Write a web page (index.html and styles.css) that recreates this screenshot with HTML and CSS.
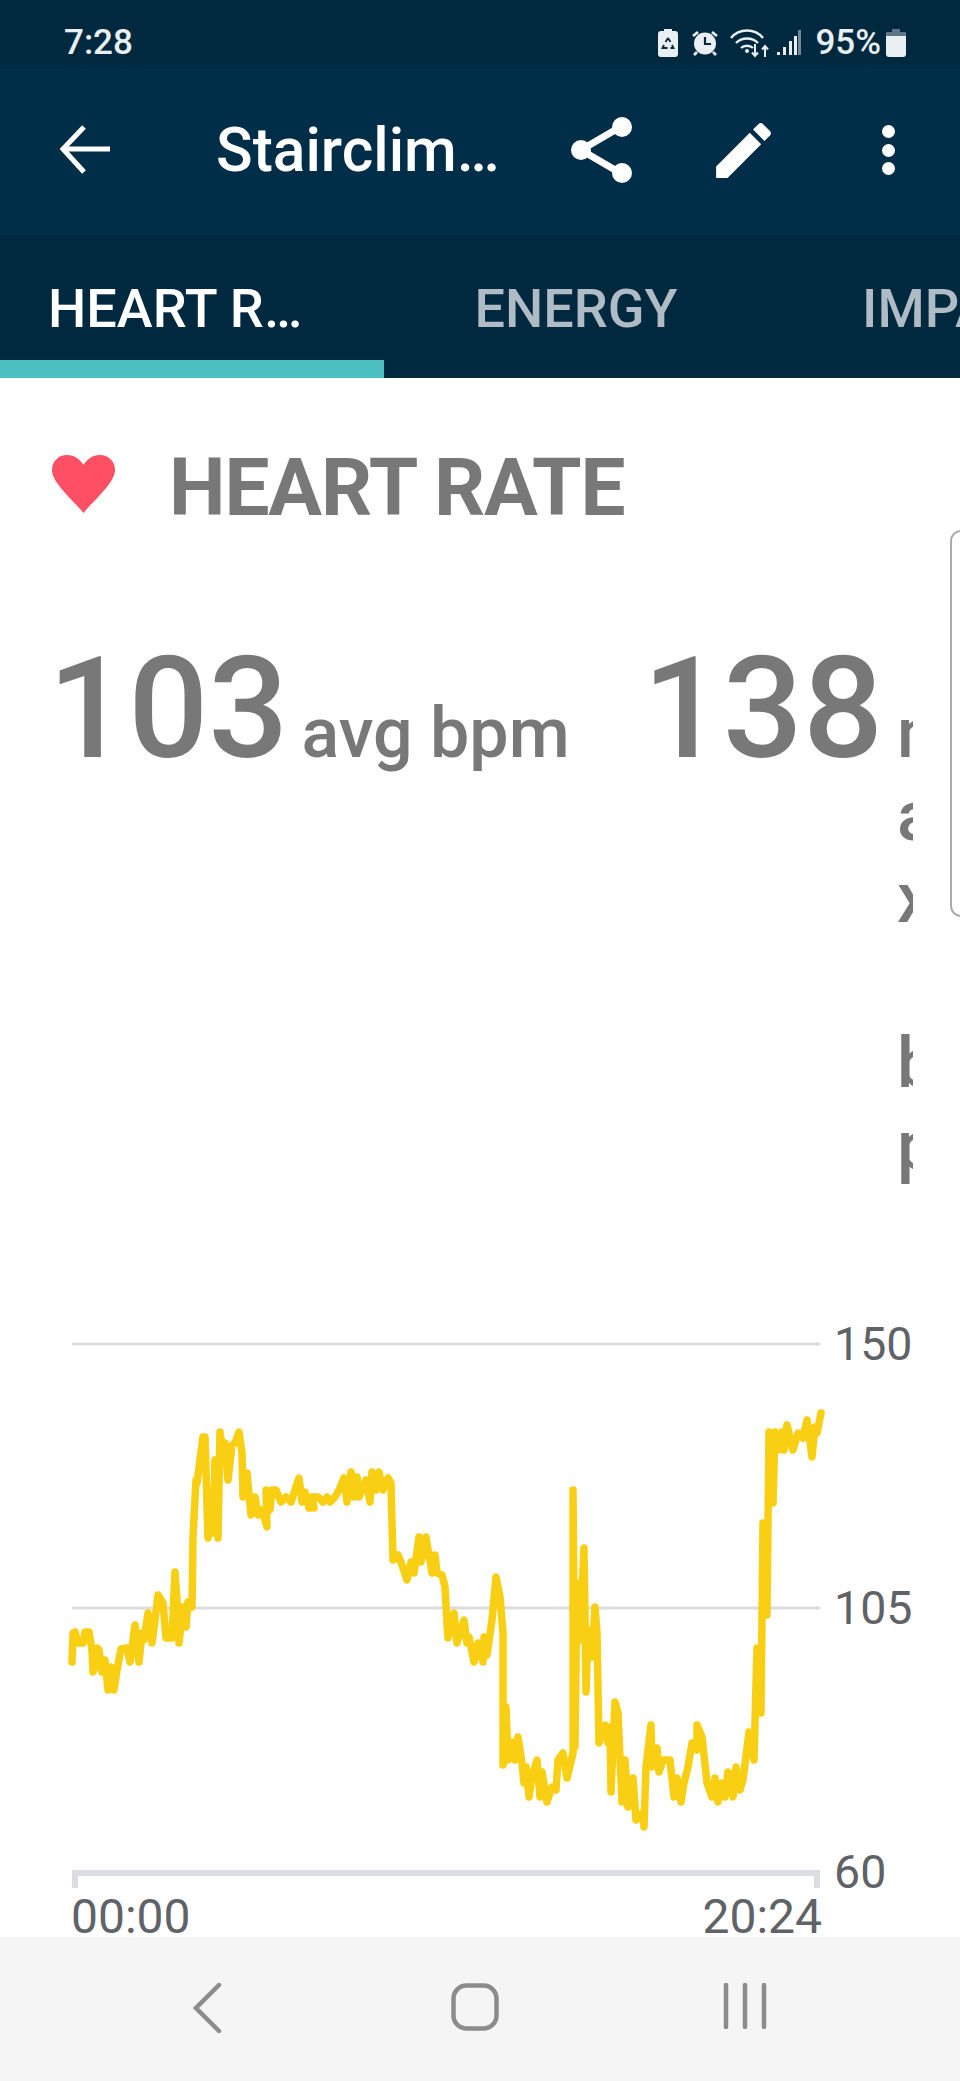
FILE: index.html
```html
<!DOCTYPE html>
<html lang="en">
<head>
<meta charset="utf-8">
<title>Stairclimber</title>
<link rel="stylesheet" href="styles.css">
</head>
<body>
<div class="screen">
  <header class="appbar">
    <div class="status">
      <span class="clock">7:28</span>
      <div class="status-icons">
        <svg class="ic-saver" width="20" height="28" viewBox="0 0 20 28"><path d="M6 0h8v2h3a3 3 0 0 1 3 3v20a3 3 0 0 1-3 3H3a3 3 0 0 1-3-3V5a3 3 0 0 1 3-3h3z" fill="#e9eff3"/><path d="M10 9l-2.500 4M10 9l2.500 4M6 16l-1.500 3h5M14 16l1.500 3h-3" fill="none" stroke="#06283d" stroke-width="1.800"/></svg>
        <svg class="ic-alarm" width="28" height="26" viewBox="0 0 28 26"><circle cx="14" cy="13.500" r="11" fill="#e9eff3"/><path d="M14 7v7h6" fill="none" stroke="#06283d" stroke-width="2.200"/><path d="M2 6l5-4M26 6l-5-4M6 22l-3 3M22 22l3 3" stroke="#e9eff3" stroke-width="2.800" fill="none"/></svg>
        <svg class="ic-wifi" width="40" height="30" viewBox="0 0 40 30"><path d="M1 10C9 0 25 0 33 10M6 15c6-6 16-6 22 0M11 20c3-3 9-3 12 0" fill="none" stroke="#e9eff3" stroke-width="2.400"/><circle cx="17" cy="23" r="2" fill="#e9eff3"/><path d="M25 16v12m-3-3.500l3 3.500 3-3.500M35 29V18m-3 3.500l3-3.500 3 3.500" fill="none" stroke="#e9eff3" stroke-width="2"/></svg>
        <svg class="ic-signal" width="24" height="26" viewBox="0 0 24 26"><path d="M0 22h3v3H0zM6 17h3v8H6zM12 11h3v14h-3z M17 6h3v19h-3z" fill="#e9eff3"/><path d="M21 0h3v25h-3z" fill="#6f8796"/></svg>
        <span class="pct">95%</span>
        <svg class="ic-batt" width="20" height="28" viewBox="0 0 20 28"><path d="M6 0h8v3H6z" fill="#5d7688"/><path d="M3 3h14a3 3 0 0 1 3 3v19a3 3 0 0 1-3 3H3a3 3 0 0 1-3-3V6a3 3 0 0 1 3-3z" fill="#e9eff3"/><path d="M3 3h14a3 3 0 0 1 3 3v1H0V6a3 3 0 0 1 3-3z" fill="#5d7688"/></svg>
      </div>
    </div>
    <div class="toolbar">
      <svg class="tb-back" width="52" height="50" viewBox="0 0 52 50"><path d="M50 24H3M24 2L3 24l21 23" fill="none" stroke="#fff" stroke-width="5"/></svg>
      <div class="tb-title">Stairclimber</div>
      <svg class="tb-share" width="64" height="66" viewBox="0 0 64 66"><path d="M52 9L11 33l41 24" fill="none" stroke="#fff" stroke-width="7"/><circle cx="52" cy="10" r="10" fill="#fff"/><circle cx="11" cy="33" r="10" fill="#fff"/><circle cx="52" cy="56" r="10" fill="#fff"/></svg>
      <svg class="tb-edit" width="73" height="73" viewBox="0 0 24 24"><path d="M3 17.250V21h3.750L17.810 9.940l-3.750-3.750L3 17.250zM20.710 7.040c.39-.39.39-1.020 0-1.410l-2.340-2.340c-.39-.39-1.020-.39-1.410 0l-1.830 1.830 3.750 3.750 1.830-1.830z" fill="#fff"/></svg>
      <div class="tb-more"><i></i><i></i><i></i></div>
    </div>
    <nav class="tabs">
      <div class="tab tab-active"><span>HEART RATE</span></div>
      <div class="tab"><span>ENERGY</span></div>
      <div class="tab"><span>IMPACT</span></div>
    </nav>
  </header>

  <main class="detail">
    <div class="heading">
      <svg class="heart" width="63" height="58" viewBox="0 0 63 58"><path d="M31.500 58C22 46 0 28 0 15 0 6 7 0 15 0c7 0 13 4 16.500 10C35 4 41 0 48 0c8 0 15 6 15 15 0 13-22 31-31.500 43z" fill="#ff4f64"/></svg>
      <h1>HEART RATE</h1>
    </div>
    <div class="stats">
      <span class="num">103</span>
      <span class="unit">avg bpm</span>
      <span class="num num-max">138</span>
      <div class="unit unit-narrow"><b>m</b><b>a</b><b>x</b><b>&nbsp;</b><b>b</b><b>p</b></div>
    </div>
    <svg class="chart" width="960" height="637" viewBox="0 1304 960 637">
      <path class="grid" d="M72 1344H820M72 1608H820"/>
      <path class="axis" d="M75 1888V1873H817V1888"/>
      <polyline class="trace" points="72,1662 73,1633 75,1632 78,1643 83,1643 85,1632 89,1632 92,1650 93,1672 96,1663 97,1648 99,1650 102,1672 105,1660 108,1690 111,1667 114,1690 117,1670 121,1649 127,1648 130,1662 135,1625 139,1662 142,1633 144,1640 148,1613 152,1643 155,1620 158,1595 163,1603 166,1638 172,1638 175,1572 177,1600 179,1643 183,1607 186,1627 188,1602 192,1607 193,1537 196,1480 197,1483 200,1460 203,1437 205,1437 208,1538 211,1490 213,1533 215,1460 218,1538 220,1432 223,1453 225,1443 228,1480 232,1445 235,1443 239,1432 242,1453 243,1497 247,1473 251,1515 255,1497 258,1515 262,1510 267,1527 266,1490 270,1510 272,1490 276,1490 281,1502 286,1497 291,1502 295,1490 299,1478 302,1502 305,1492 309,1508 314,1508 312,1497 318,1497 323,1502 327,1497 330,1502 335,1497 340,1488 344,1478 347,1502 351,1472 354,1497 357,1477 359,1497 366,1480 370,1502 372,1472 376,1490 379,1472 383,1490 388,1478 391,1483 393,1560 398,1555 402,1565 407,1580 411,1562 414,1573 419,1537 421,1562 426,1537 432,1573 435,1555 437,1573 442,1575 445,1587 447,1623 448,1638 454,1613 457,1643 464,1620 467,1643 469,1637 474,1662 478,1643 483,1662 484,1637 487,1655 492,1620 496,1577 500,1597 503,1633 503,1765 506,1707 508,1760 512,1742 515,1760 518,1737 522,1763 524,1783 526,1767 529,1797 532,1777 537,1760 540,1797 542,1772 547,1802 552,1787 556,1790 558,1760 563,1753 567,1778 573,1753 573,1490 575,1747 577,1583 580,1640 584,1548 586,1692 588,1630 592,1657 595,1607 597,1633 599,1743 605,1725 608,1743 610,1727 611,1792 615,1702 618,1713 622,1802 625,1760 628,1807 633,1778 636,1820 642,1813 644,1827 646,1767 651,1725 652,1767 657,1748 659,1772 663,1760 670,1760 674,1797 677,1778 681,1802 684,1783 688,1767 692,1743 697,1750 697,1725 702,1737 707,1783 712,1797 715,1778 718,1802 722,1783 725,1797 728,1772 733,1797 736,1767 740,1790 743,1780 749,1732 754,1760 757,1648 761,1713 763,1523 767,1615 769,1432 773,1503 775,1432 778,1450 782,1432 784,1450 787,1425 793,1450 798,1433 803,1438 807,1420 812,1457 815,1427 817,1433 821,1413"/>
      <text class="tick" x="834" y="1360">150</text>
      <text class="tick" x="834" y="1624">105</text>
      <text class="tick" x="834" y="1888">60</text>
      <text class="tick tick-x" x="71" y="1933">00:00</text>
      <text class="tick tick-x tick-end" x="822" y="1933">20:24</text>
    </svg>
    <div class="edge-handle"></div>
  </main>

  <footer class="navbar">
    <svg width="30" height="50" viewBox="0 0 30 50"><path d="M26 2L3 25l23 23" fill="none" stroke="#8c8c8c" stroke-width="4.500" stroke-linecap="round"/></svg>
    <svg width="48" height="48" viewBox="0 0 48 48"><rect x="2.500" y="2.500" width="43" height="43" rx="13" fill="none" stroke="#8c8c8c" stroke-width="4.500"/></svg>
    <svg width="44" height="46" viewBox="0 0 44 46"><path d="M3 2v42M22 2v42M41 2v42" fill="none" stroke="#8c8c8c" stroke-width="4.500" stroke-linecap="round"/></svg>
  </footer>
</div>
</body>
</html>
```
FILE: styles.css
```css
* { box-sizing: border-box; }

html, body {
  margin: 0;
  padding: 0;
}

body {
  font-family: Roboto, "Liberation Sans", sans-serif;
  background: #fff;
}

.screen {
  width: 960px;
  height: 2081px;
  display: flex;
  flex-direction: column;
  overflow: hidden;
}

/* top chrome */
.appbar { flex: none; }

.status {
  height: 65px;
  background: #00283f;
  display: flex;
  align-items: center;
  justify-content: space-between;
  padding: 20px 54px 0 64px;
  color: #e9eff3;
}

.clock { font-size: 35px; font-weight: 500; }

.status-icons {
  display: flex;
  align-items: center;
}

.ic-alarm { margin-left: 13px; }
.ic-wifi { margin-left: 11px; }
.ic-signal { margin-left: 7px; }
.pct { margin-left: 14px; font-size: 35px; font-weight: 500; }
.ic-batt { margin-left: 5px; }

.toolbar {
  height: 170px;
  background: #002e48;
  display: flex;
  align-items: center;
  color: #fff;
}

.tb-back { margin-left: 60px; flex: none; }

.tb-title {
  margin-left: 104px;
  width: 284px;
  flex: none;
  font-size: 60.500px;
  font-weight: 500;
  white-space: nowrap;
  overflow: hidden;
  text-overflow: ellipsis;
}

.tb-share { margin-left: 70px; flex: none; }
.tb-edit { margin-left: 73px; flex: none; }

.tb-more {
  margin-left: 102px;
  display: flex;
  flex-direction: column;
  gap: 5.500px;
}

.tb-more i {
  width: 13px;
  height: 13px;
  border-radius: 50%;
  background: #fff;
}

.tabs {
  height: 143px;
  background: #00283f;
  display: flex;
  overflow: hidden;
}

.tab {
  flex: none;
  width: 384px;
  height: 143px;
  display: flex;
  align-items: center;
  justify-content: center;
  padding: 4px 48px 0;
  font-size: 54px;
  font-weight: 500;
  color: #b0bcc5;
}

.tab span {
  white-space: nowrap;
}

.tab-active {
  color: #fff;
  justify-content: flex-start;
  border-bottom: 18px solid #4cc0c0;
  padding: 22px 76px 0 48px;
}

.tab-active span {
  overflow: hidden;
  text-overflow: ellipsis;
}

/* heart rate panel */
.detail {
  flex: 1;
  position: relative;
  background: #fff;
  overflow: hidden;
  color: #787878;
}

.heading {
  display: flex;
  align-items: flex-start;
  padding: 74px 0 0 52px;
}

.heart { margin-top: 3px; flex: none; }

.heading h1 {
  margin: 0 0 0 54px;
  font-size: 80px;
  font-weight: 700;
  line-height: 72px;
  letter-spacing: -1.100px;
}

.stats {
  display: flex;
  align-items: baseline;
  margin-top: 130px;
  padding-left: 48px;
}

.num {
  font-size: 141px;
  font-weight: 500;
  line-height: 110px;
}

.num-max { margin-left: 73px; }

.unit {
  font-size: 70px;
  font-weight: 500;
  margin-left: 13px;
  line-height: 82.500px;
  white-space: nowrap;
}

.unit-narrow {
  width: 16px;
  margin-left: 14px;
  overflow: clip;
}

.unit-narrow b {
  display: block;
  font-weight: 500;
}

.chart {
  display: block;
  position: absolute;
  left: 0;
  top: 926px;
}

.grid {
  fill: none;
  stroke: #dcdcdc;
  stroke-width: 3;
}

.axis {
  fill: none;
  stroke: #dcdde0;
  stroke-width: 6;
}

.trace {
  fill: none;
  stroke: #f9cf14;
  stroke-width: 7.500;
  stroke-linejoin: round;
  stroke-linecap: round;
}

.tick {
  font-size: 46.500px;
  fill: #5f6368;
}

.tick-x { font-size: 48px; }

.tick-end { text-anchor: end; }

.edge-handle {
  position: absolute;
  top: 152px;
  right: -12px;
  width: 22px;
  height: 387px;
  border: 2px solid #ababab;
  border-radius: 12px;
  background: #fff;
}

/* system navigation */
.navbar {
  flex: none;
  height: 144px;
  background: #f5f5f5;
  display: flex;
  align-items: flex-start;
  padding-top: 46px;
}

.navbar svg:nth-child(1) { margin-left: 193px; }
.navbar svg:nth-child(2) { margin-left: 228px; }
.navbar svg:nth-child(3) { margin-left: 224px; }
```
